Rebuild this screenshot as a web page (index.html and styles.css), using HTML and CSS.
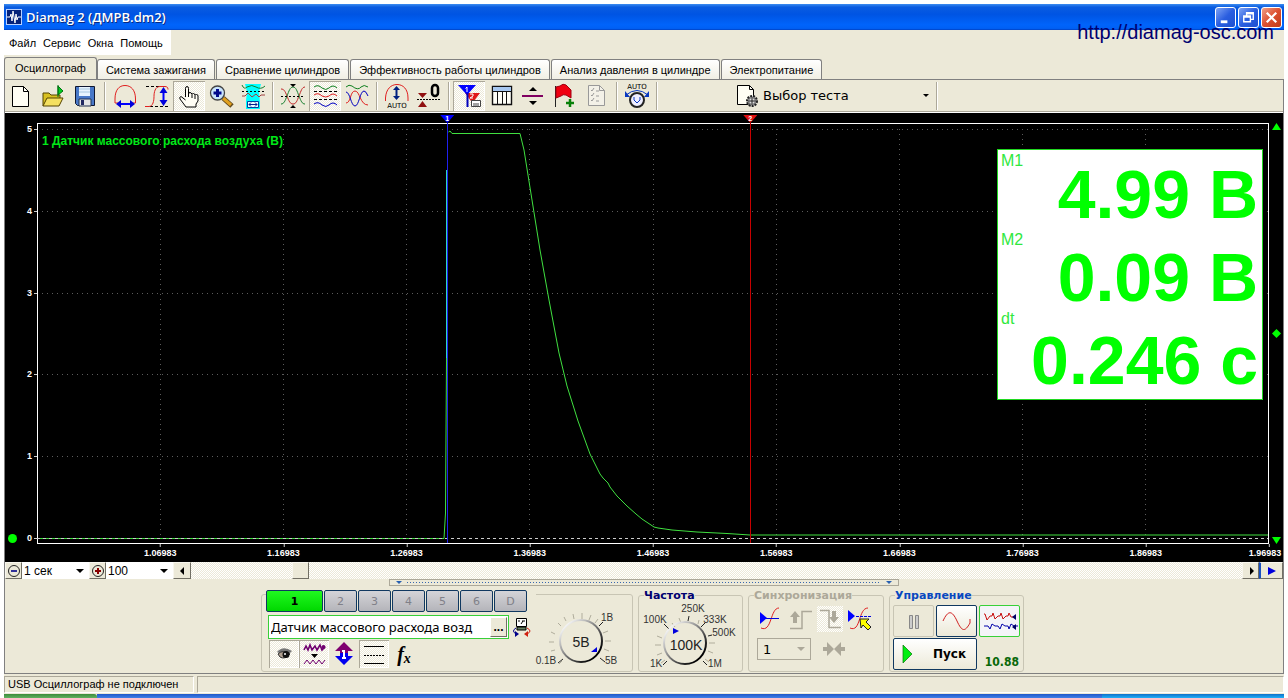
FILE: index.html
```html
<!DOCTYPE html>
<html lang="ru">
<head>
<meta charset="utf-8">
<title>Diamag 2 (ДМРВ.dm2)</title>
<link rel="stylesheet" href="styles.css">
</head>
<body>
<div class="window">
  <header class="titlebar">
    <svg class="app-icon" viewBox="0 0 16 16"><rect x=".5" y=".5" width="15" height="15" fill="#04227a" stroke="#b8d0ff"/><path d="M1 8h3l1-3 1 7 1-10 2 12 1-9 1 6 1-3h3" fill="none" stroke="#fff"/></svg>
    <h1 class="title">Diamag 2 (ДМРВ.dm2)</h1>
    <button class="win-btn" aria-label="Свернуть"><svg viewBox="0 0 20 20"><path d="M5 13h7v3H5z" fill="#fff"/></svg></button>
    <button class="win-btn" aria-label="Восстановить"><svg viewBox="0 0 20 20"><path d="M8 8V5h7v7h-3M8 6h7M5 8.500h7v6H5zM5 9.500h7" fill="none" stroke="#fff" stroke-width="1.500"/></svg></button>
    <button class="win-btn close" aria-label="Закрыть"><svg viewBox="0 0 20 20"><path d="M5 5l10 10M15 5L5 15" stroke="#fff" stroke-width="2.400"/></svg></button>
    <a class="site-link" href="#site">http://diamag-osc.com</a>
  </header>
  <nav class="menubar">
    <button>Файл</button><button>Сервис</button><button>Окна</button><button>Помощь</button>
  </nav>
  <nav class="tabs">
    <button class="tab active">Осциллограф</button>
    <button class="tab">Система зажигания</button>
    <button class="tab">Сравнение цилиндров</button>
    <button class="tab">Эффективность работы цилиндров</button>
    <button class="tab">Анализ давления в цилиндре</button>
    <button class="tab">Электропитание</button>
  </nav>
  <main class="panel">
    <div class="toolbar">
      <button class="tool" aria-label="Новый"><svg viewBox="0 0 32 30"><path d="M7.500 5.500h11l5 5v15h-16z" fill="#fffef4" stroke="#000"/><path d="M18.500 5.500v5h5" fill="none" stroke="#000"/></svg></button>
      <button class="tool" aria-label="Открыть"><svg viewBox="0 0 32 30"><path d="M6 25V12h6l2 2h9v4" fill="#d8c020" stroke="#554400"/><path d="M6 25l4-8h16l-4 8z" fill="#f4e060" stroke="#554400"/><path d="M21 4v12M21 5l5 5-5 4z" fill="#00d020" stroke="#007010"/></svg></button>
      <button class="tool" aria-label="Сохранить"><svg viewBox="0 0 32 30"><path d="M6.500 5.500h19v19h-17l-2-2z" fill="#4878c8" stroke="#101830"/><path d="M10 6h11v9H10z" fill="#e8f4ff"/><path d="M10 8h11M10 11h11" stroke="#a8c8e0"/><path d="M10 18h12v7H10z" fill="#e4e4e4" stroke="#203050"/><path d="M12 19h3v5h-3z" fill="#202860"/></svg></button>
      <span class="sep"></span>
      <button class="tool" aria-label="Ширина"><svg viewBox="0 0 32 30"><path d="M9 22H6v-4C6 9 10 4.500 16 4.500S26.500 9 26.500 18v4H24" fill="none" stroke="#e02020"/><path d="M10 23h13" stroke="#00f" stroke-width="2"/><path d="M7 23l5-4v8zM26 23l-5-4v8z" fill="#00d"/></svg></button>
      <button class="tool" aria-label="Высота"><svg viewBox="0 0 32 30"><path d="M5 5.500h20M9 25.500h18" stroke="#000" stroke-dasharray="3 2"/><path d="M4 25.500h4c4 0 5-6 5-10s1-10 6-10h5c2 0 3 1 3 3" fill="none" stroke="#e02020"/><path d="M22.500 9v14" stroke="#00f" stroke-width="2"/><path d="M22.500 6l4 6h-8zM22.500 25l4-6h-8z" fill="#00d"/></svg></button>
      <button class="tool pressed" aria-label="Рука"><svg viewBox="0 0 32 30"><path d="M12.500 16V7.500q0-2 1.500-2t1.500 2V13q0-1.500 1.500-1.500T19 13.500q0-1 1.500-1t1.500 2q0-1 1.500-1t1.500 1.500v5l-2 3v3h-10l-6-8q-1-2 1-2.500l4.500 3.500M15.500 13v3M19 14v3M22 15v3" fill="#fffdf4" stroke="#000"/></svg></button>
      <button class="tool" aria-label="Лупа"><svg viewBox="0 0 32 30"><path d="M18 17l9 8" stroke="#60481c" stroke-width="5"/><path d="M18 17l8 7" stroke="#e0a020" stroke-width="3"/><circle cx="12.500" cy="12" r="7" fill="#c8e4fc" stroke="#444" stroke-width="1.300"/><path d="M8.500 12h8M12.500 8v8" stroke="#00098c" stroke-width="3"/></svg></button>
      <button class="tool" aria-label="Окно измерения"><svg viewBox="0 0 32 30"><path d="M8 3h16l-2 8 1 10v7H9v-9l1-8z" fill="#0ff"/><path d="M5 4q2 5 5 2 5-3 9 0 5 3 9-1" fill="none" stroke="#108030"/><path d="M5 10.500h23" stroke="#000" stroke-dasharray="2 2"/><path d="M5 15h3l3-3 4 4 4-3 3 3 2-2h4" fill="none" stroke="#a04040"/><path d="M10.500 20.500h11v6h-11z" fill="#e8fcff" stroke="#0040a0"/><path d="M12 23.500h8M14 21.500l-2 2 2 2M18 21.500l2 2-2 2" fill="none" stroke="#002090"/></svg></button>
      <span class="sep"></span>
      <button class="tool" aria-label="Пересечение"><svg viewBox="0 0 32 30"><path d="M4 8c3 0 4 2 6 7s3 8 6 8 4-3 6-8 3-9 6-9" fill="none" stroke="#c02828"/><path d="M4 23c3 0 4-3 6-8s3-9 6-9 4 4 6 9 3 8 6 8" fill="none" stroke="#188030"/><path d="M4 15.500h24" stroke="#000" stroke-dasharray="2 2"/><path d="M13 3h6l-3 3zM13 27h6l-3-3z"/></svg></button>
      <button class="tool pressed" aria-label="Раздельно"><svg viewBox="0 0 32 30"><path d="M5 6q4-3 8 1 4 3 7 0 4-4 8 0" fill="none" stroke="#108020"/><path d="M5 14q4-3 8 1 4 2 7 0 4-4 8 0" fill="none" stroke="#e02020"/><path d="M5 23q4-3 8 1 4 3 7 0 4-4 8 0" fill="none" stroke="#0000c0"/><path d="M5 10.500h23M5 18.500h23" stroke="#000" stroke-dasharray="3 2"/></svg></button>
      <button class="tool" aria-label="Вместе"><svg viewBox="0 0 32 30"><path d="M5 6q3-3 6-1 6 5 9 1 3-3 7 0" fill="none" stroke="#108020"/><path d="M5 22c5 0 4-12 9-12s5 14 13 14" fill="none" stroke="#e02020"/><path d="M5 11c4 0 5 14 9 14s5-15 9-15q2 0 4 5" fill="none" stroke="#0000c0"/></svg></button>
      <span class="sep"></span>
      <button class="tool" aria-label="Авто масштаб"><svg viewBox="0 0 32 30"><path d="M4.500 20v-3C5 8 10 3.500 16 3.500S27 8 27 17v3" fill="none" stroke="#e02020"/><path d="M15.500 8v8" stroke="#002080" stroke-width="2"/><path d="M15.500 5l3.500 4h-7zM15.500 19l3.500-4h-7z" fill="#002080"/><text x="16" y="27" class="ico-text">AUTO</text></svg></button>
      <button class="tool" aria-label="Ноль"><svg viewBox="0 0 32 30"><path d="M4 18.500h23" stroke="#000" stroke-dasharray="2 1"/><path d="M5 12h9l-4.500 5zM5 26h9l-4.500-6z" fill="#901010"/><rect x="19" y="4" width="6" height="11" rx="3" fill="none" stroke="#000" stroke-width="2.500"/></svg></button>
      <span class="sep"></span>
      <button class="tool pressed" aria-label="Маркеры"><svg viewBox="0 0 32 30"><path d="M12 12h15l-7.500 10z" fill="#e01818"/><path d="M5 4h18l-9 10z" fill="#00f"/><path d="M14.500 12v14" stroke="#00b" stroke-width="2"/><path d="M14 6v5M12.500 7.500L14 6" stroke="#fff"/><path d="M17 13h3v2l-3 2h3" fill="none" stroke="#fff"/><path d="M18.500 19.500h9v6h-9z" fill="#fff" stroke="#444"/><path d="M21 22v3M23 22v3M25 22v3" stroke="#444"/></svg></button>
      <button class="tool" aria-label="Таблица"><svg viewBox="0 0 32 30"><path d="M7.500 5.500h19v18h-19z" fill="#fffff8" stroke="#111" stroke-width="1.400"/><path d="M8 6h18v4H8z" fill="#a8c8f0"/><path d="M8 10.500h18M12.500 10v13M17.500 10v13M21.500 10v13" stroke="#111"/></svg></button>
      <button class="tool" aria-label="Разделитель"><svg viewBox="0 0 32 30"><path d="M5 15h21" stroke="#800060" stroke-width="2"/><path d="M12 10h8l-4-4zM12 20h8l-4 4z"/></svg></button>
      <button class="tool" aria-label="Флаг"><svg viewBox="0 0 32 30"><path d="M6.500 5v21" stroke="#222"/><path d="M7 6l4-1q3-3 6-1l5 5v8l-5-3q-3-1-5 1l-5 2z" fill="#f00010" stroke="#a00010"/><path d="M17 22h8M21 18v8" stroke="#088008" stroke-width="2.500"/></svg></button>
      <button class="tool" aria-label="Список"><svg viewBox="0 0 32 30"><path d="M7.500 4.500h11l5 5v15h-16z" fill="#f3f1e8" stroke="#999"/><path d="M18.500 4.500v5h5M10 9l1 1 2-3M10 14l1 1 2-3M10 19l1 1 2-3M15 10h3M15 15h3M15 20h3" fill="none" stroke="#999"/></svg></button>
      <span class="sep"></span>
      <button class="tool" aria-label="Авто"><svg viewBox="0 0 32 30"><text x="16" y="8" class="ico-text">AUTO</text><path d="M5 14q11-9 22 0" fill="none" stroke="#0838c0"/><path d="M4 10v6h5zM28 10v6h-5z" fill="#0838c0"/><circle cx="16" cy="19" r="7" fill="#eef" stroke="#222" stroke-width="2"/><path d="M13 16v3l3 3 3-3v-3" fill="none" stroke="#0838c0"/></svg></button>
      <span class="sep"></span>
      <button class="test-select"><svg viewBox="0 0 24 24"><path d="M1.500 1.500h12l4 4v15h-16z" fill="#fffef4" stroke="#000"/><path d="M13.500 1.500v4h4" fill="none" stroke="#000"/><circle cx="16" cy="17" r="5" fill="#bbb" stroke="#222" stroke-width="2" stroke-dasharray="2 1"/><circle cx="16" cy="17" r="3.500" fill="#ddd" stroke="#555"/><path d="M13 17h6M16 14v6" stroke="#222"/></svg><span>Выбор теста</span><i class="caret"></i></button>
      <span class="sep"></span>
    </div>

    <section class="scope" aria-label="Осциллограмма">
      <div class="axis-left"><i class="zero-dot"></i></div>
      <div class="plot">
        <svg class="plot-svg" viewBox="0 0 1232 421" preserveAspectRatio="none">
          <g class="grid">
            <path d="M0 6H1231M0 88H1231M0 170H1231M0 251H1231M0 333H1231"/>
            <path d="M123 6V415M246 6V415M369 6V415M492 6V415M616 6V415M739 6V415M862 6V415M985 6V415M1108 6V415"/>
          </g>
          <path class="frame" d="M.5 .5H1231.500V420.500H.5z"/>
          <path class="trace" d="M0 415.500H407L408.500 390L409.500 235V48M411.500 9L413 8L415 10.500H483L487 27L495 77L503 127L512 177L522 230L530 263L541 298L553 331L563 351L566 355L571 360L573 364L580 373L590 383L599 391L605 396L614 402L617 404L621 405L635 407L660 409L690 410.500L713 412H1231"/>
          <path class="zero" d="M0 415.500H1231"/>
          <path class="m1" d="M410.500 0V420"/>
          <path class="trace edge" d="M409.500 47V235"/>
          <path class="m2" d="M713.500 0V420"/>
        </svg>
        <span class="tick-y" style="top:1.5%">5</span><span class="tick-y" style="top:21%">4</span><span class="tick-y" style="top:40.4%">3</span><span class="tick-y" style="top:59.7%">2</span><span class="tick-y" style="top:79.2%">1</span><span class="tick-y" style="top:98.6%">0</span>
        <span class="tick-x" style="left:10%">1.06983</span><span class="tick-x" style="left:20%">1.16983</span><span class="tick-x" style="left:30%">1.26983</span><span class="tick-x" style="left:40%">1.36983</span><span class="tick-x" style="left:50%">1.46983</span><span class="tick-x" style="left:60%">1.56983</span><span class="tick-x" style="left:70%">1.66983</span><span class="tick-x" style="left:80%">1.76983</span><span class="tick-x" style="left:90%">1.86983</span><span class="tick-x last" style="left:100%">1.96983</span>
        <span class="flag flag-1" style="left:33.3%">1</span>
        <span class="flag flag-2" style="left:57.9%">2</span>
        <h2 class="channel-name">1 Датчик массового расхода воздуха (В)</h2>
        <div class="readout">
          <div class="readout-labels"><span>M1</span><span>M2</span><span>dt</span></div>
          <div class="readout-values"><span>4.99 В</span><span>0.09 В</span><span>0.246 с</span></div>
        </div>
      </div>
      <div class="axis-right">
        <svg viewBox="0 0 9 7"><path d="M4.500 0L9 7H0z"/></svg>
        <svg viewBox="0 0 9 9"><path d="M4.500 0L9 4.500L4.500 9L0 4.500z"/></svg>
        <svg viewBox="0 0 9 7"><path d="M4.500 7L9 0H0z"/></svg>
      </div>
    </section>

    <div class="timebar">
      <button class="bevel" aria-label="Уменьшить"><svg viewBox="0 0 14 14"><circle cx="7" cy="7" r="5.500" fill="none" stroke="#222"/><path d="M4 7h6" stroke="#008" stroke-width="1.600"/></svg></button>
      <span class="combo"><select aria-label="Время"><option>1 сек</option></select></span>
      <button class="bevel" aria-label="Увеличить"><svg viewBox="0 0 14 14"><circle cx="7" cy="7" r="5.500" fill="none" stroke="#222"/><path d="M4 7h6M7 4v6" stroke="#800" stroke-width="2"/></svg></button>
      <span class="combo"><select aria-label="Масштаб"><option>100</option></select></span>
      <button class="bevel scroll-left" aria-label="Влево"><svg viewBox="0 0 14 14"><path d="M9 3v8L5 7z"/></svg></button>
      <div class="track"><button class="bevel thumb" aria-label="Прокрутка"></button></div>
      <button class="bevel" aria-label="Вправо"><svg viewBox="0 0 14 14"><path d="M6 3v8l4-4z"/></svg></button>
      <button class="bevel play" aria-label="Воспроизвести"><svg viewBox="0 0 14 14"><path d="M3 3v8l8-4z" fill="#00d"/></svg></button>
    </div>

    <div class="splitter"><i class="tri"></i><i class="dots"></i><i class="tri"></i></div>

    <div class="controls">
      <section class="box channel">
        <div class="channel-main">
          <div class="channel-tabs">
            <button class="ch on">1</button><button class="ch">2</button><button class="ch">3</button><button class="ch">4</button><button class="ch">5</button><button class="ch">6</button><button class="ch">D</button>
          </div>
          <div class="name-row">
            <div class="name-field"><input type="text" aria-label="Датчик" value="Датчик массового расхода возд"><button class="more" aria-label="Выбрать">...</button></div>
            <button class="plain" aria-label="Переключить"><svg viewBox="0 0 20 22"><path d="M4.500 2.500h10v8h-10z" fill="#fff" stroke="#000"/><path d="M5 11h9v3H5z" fill="#668060" stroke="#000"/><path d="M6 5h2M10 5h3M9 8l2-3" stroke="#000"/><path d="M4 12q-5 3 0 6" fill="none" stroke="#008"/><path d="M3 15v6l4-3z" fill="#008"/><path d="M15 12q6 3 0 6" fill="none" stroke="#d02010"/><path d="M16 15v6l-4-3z" fill="#d02010"/></svg></button>
          </div>
          <div class="ch-tools">
            <button class="ct pressed" aria-label="Видимость"><svg viewBox="0 0 30 28"><path d="M8 12q6-7 15-1l-2 2H10z" fill="#777"/><path d="M9 14q5-5 12 0-5 6-10 3z" fill="#b0a090" stroke="#333"/><circle cx="17" cy="14.500" r="3.500" fill="#111"/><circle cx="16" cy="14" r="1" fill="#fff"/></svg></button>
            <button class="ct pressed" aria-label="Фильтр"><svg viewBox="0 0 30 28"><path d="M5 10l2-4 2 4 2-5 2 5 3-4 2 4 3-5 2 5 3-3" fill="none" stroke="#700070" stroke-width="1.600"/><circle cx="24.500" cy="7" r="2" fill="#700070"/><path d="M12 14h7l-3.500 4z"/><path d="M5 24l3-4 3 4 3-4 3 4 3-4 3 4 3-4" fill="none" stroke="#700070"/></svg></button>
            <button class="ct" aria-label="Инверсия"><svg viewBox="0 0 30 28"><path d="M15 2l9 9h-5v3h-8v-3H6z" fill="#800070"/><path d="M15 25l9-9h-5v-3h-8v3H6z" fill="#0000f0"/><path d="M15 10v8M13 18h4M13 11h2" stroke="#fff" stroke-width="2"/></svg></button>
            <button class="ct pressed" aria-label="Линии"><svg viewBox="0 0 30 28"><path d="M5 6.500h20M5 23.500h20" stroke="#000"/><path d="M5 15.500h20" stroke="#000" stroke-dasharray="2 1"/></svg></button>
            <button class="ct fx"><i>f<sub>x</sub></i></button>
          </div>
        </div>
        <svg class="dial" viewBox="0 0 98 70">
          <defs><linearGradient id="rim" x1="0" y1="0" x2="1" y2="1"><stop offset=".1" stop-color="#fff"/><stop offset=".5" stop-color="#777"/><stop offset=".85" stop-color="#000"/></linearGradient></defs>
          <path class="minor" d="M28 59l-3 3M21 48l-4 1M20 40h-5M21 32l-4-2M27 24l-3-3M32 19l-2-4M40 17l-1-5M48 17v-6M55 18l2-5M61 21l3-4M69 31l5-2M71 39h6M70 47l5 2"/>
          <path class="major" d="M65 24l4-4M29 57l-5 4M66 56l5 4"/>
          <circle cx="47" cy="39" r="21" fill="none" stroke="url(#rim)" stroke-width="2"/>
          <path d="M57 50h6v-5z" fill="#00d"/>
          <text x="47" y="45" class="dial-value">5B</text>
          <text x="73" y="19">1B</text><text x="12" y="62">0.1B</text><text x="77" y="62">5B</text>
        </svg>
      </section>

      <fieldset class="box freq">
        <legend>Частота</legend>
        <svg class="dial" viewBox="0 0 98 70">
          <path class="minor" d="M23 55l-4 3M20 48l-5 2M19 40h-6M20 33l-5-2M33 22l-3-4M39 18l-2-5M56 19l1-4M67 38h6M66 46l5 2M63 54l4 3"/>
          <path class="major" d="M27 24l-5-5M46 16l1-5M59 22l4-4M66 31l4-1M61 56l4 4M25 56l-4 4"/>
          <circle cx="43" cy="38" r="21" fill="none" stroke="url(#rim)" stroke-width="2"/>
          <path d="M31 23v6l6-3z" fill="#00d"/>
          <text x="44" y="45" class="dial-value">100K</text>
          <text x="51" y="7">250K</text><text x="13" y="18">100K</text><text x="73" y="18">333K</text><text x="82" y="31">500K</text><text x="73" y="62">1M</text><text x="14" y="62">1K</text>
        </svg>
      </fieldset>

      <fieldset class="box sync">
        <legend>Синхронизация</legend>
        <div class="sync-row">
          <button class="plain" aria-label="Уровень"><svg viewBox="0 0 26 26"><path d="M4 22c11 5 9-20 18-20" fill="none" stroke="#e02020"/><path d="M4 12.500h18" stroke="#00d"/><path d="M3 6v12l7-6z" fill="#00f"/></svg></button>
          <button class="plain" aria-label="Фронт"><svg viewBox="0 0 26 26"><path d="M3 22.500h12v-17h10" fill="none" stroke="#aca899" stroke-width="1.500"/><path d="M8 5l5 6h-3v6H6v-6H3z" fill="#aca899"/></svg></button>
          <button class="plain pressed-flat" aria-label="Спад"><svg viewBox="0 0 26 26"><path d="M3 4.500h9v17h12" fill="none" stroke="#aca899" stroke-width="1.500"/><path d="M17 17l5-6h-3V5h-4v6h-3z" fill="#aca899"/></svg></button>
          <button class="plain" aria-label="Выбор"><svg viewBox="0 0 26 26"><path d="M3 22c11 5 8-20 18-20" fill="none" stroke="#e02020"/><path d="M9 10.500h15" stroke="#00d" stroke-dasharray="3 1"/><path d="M1 4v12l7-6z" fill="#00f"/><path d="M13 13h9l-3 3 5 5-3 3-5-5-2 3z" fill="#ff0" stroke="#222"/></svg></button>
        </div>
        <div class="sync-row">
          <span class="combo disabled"><select aria-label="Канал" disabled><option>1</option></select></span>
          <svg class="arrows" viewBox="0 0 26 26"><path d="M2 13h6M18 13h6" stroke="#aca899" stroke-width="4"/><path d="M6 6l7 7-7 7zM20 6l-7 7 7 7z" fill="#aca899"/></svg>
        </div>
      </fieldset>

      <fieldset class="box run">
        <legend>Управление</legend>
        <div class="run-grid">
          <button class="rb off" aria-label="Пауза"><svg viewBox="0 0 38 30"><path d="M14.500 9.500h3v13h-3zM20.500 9.500h3v13h-3z" fill="#ccc" stroke="#888"/></svg></button>
          <button class="rb" aria-label="Синус"><svg viewBox="0 0 38 30"><path d="M5 15C10 4 14 4 19 15S27 26 32 17V13" fill="none" stroke="#d02020"/></svg></button>
          <button class="rb green" aria-label="Сигналы"><svg viewBox="0 0 38 30"><path d="M3 8h1l2 6 3-4h2l1-3 2 6 3-3h2l1-3 2 6 3-3h2l1-3 2 4h4" fill="none" stroke="#c81010"/><path d="M3 20h4l2 3 2-5 3 2h3l2 3 2-5 3 2h3l1 3 2-5 3 2h4" fill="none" stroke="#00a"/><path d="M31 11l4-3v6zM31 21l4-3v6z" fill="#006"/></svg></button>
          <button class="rb start"><svg viewBox="0 0 12 20"><path d="M1 1v18l9-9z" fill="#00f010" stroke="#087008" stroke-width=".7"/></svg><span>Пуск</span></button>
          <output class="version">10.88</output>
        </div>
      </fieldset>
    </div>
  </main>
  <footer class="status"><span class="cell first">USB Осциллограф не подключен</span><span class="cell"></span></footer>
  <div class="taskbar"><i class="task-start"></i><i class="task-mid"></i><i class="task-tray"></i></div>
</div>
</body>
</html>
```

FILE: styles.css
```css
* { box-sizing: border-box; }
body {
  margin: 0;
  background: #fff;
  color: #000;
  font-family: "Liberation Sans", sans-serif;
  font-size: 12px;
}
button, input, select { font: inherit; color: inherit; }
button { padding: 0; border: 0; background: none; }
svg { display: block; }
.window {
  display: flex;
  flex-direction: column;
  min-height: 100vh;
  padding: 4px 4px 0;
  background: linear-gradient(#ece9d8, #ece9d8) 4px 4px / calc(100% - 8px) 100% no-repeat;
}

.titlebar {
  position: relative;
  display: flex;
  align-items: center;
  gap: 2px;
  height: 26px;
  padding: 0 2px;
  background: linear-gradient(#3c8cf0 0, #0a5ce0 12%, #0054e3 40%, #0064fb 80%, #0060f4 94%, #0040c0 100%);
}
.app-icon { width: 16px; height: 16px; }
.title {
  flex: 1;
  margin: 0 0 0 2px;
  color: #fff;
  font: 600 13px "Open Sans", sans-serif;
  text-shadow: 1px 1px 0 #0a2a80;
}
.win-btn {
  width: 21px;
  height: 21px;
  border: 1px solid #fff;
  border-radius: 3px;
  background: linear-gradient(135deg, #7fa4f4, #2a5ee0 50%, #1c50d0);
}
.win-btn.close { background: linear-gradient(135deg, #f0a088, #dc5030 50%, #c03c18); }
.site-link {
  position: absolute;
  right: 10px;
  top: 16px;
  color: #000070;
  font-size: 20px;
  line-height: 24px;
  text-decoration: none;
}

.menubar {
  align-self: flex-start;
  display: flex;
  gap: 7px;
  height: 25px;
  padding: 0 8px 0 5px;
  background: #fff;
  font-size: 11px;
}

.tabs {
  display: flex;
  align-items: flex-end;
  gap: 1px;
  height: 24px;
}
.tab {
  height: 20px;
  padding: 0 8px;
  border: 1px solid #808080;
  border-bottom: 0;
  border-radius: 3px 3px 0 0;
  background: linear-gradient(#fff, #f1efe4);
  font-size: 11px;
  white-space: nowrap;
}
.tab.active {
  height: 23px;
  margin: 0 -1px -1px 0;
  padding: 0 10px 3px;
  background: #ece9d8;
}

.panel {
  flex: 1;
  display: flex;
  flex-direction: column;
  border: 1px solid #808080;
}
.toolbar {
  display: flex;
  align-items: center;
  height: 33px;
  border-bottom: 1px solid #fff;
  box-shadow: inset 0 -1px #aca899;
  padding-bottom: 1px;
}
.tool { width: 32px; height: 30px; }
.tool svg { width: 32px; height: 30px; margin: -1px 0; }
.pressed {
  box-shadow: inset 1px 1px #aca899, inset -1px -1px #fff;
  background: repeating-conic-gradient(#fff 0 25%, #ece9d8 0 50%) 0 0 / 2px 2px;
}
.sep {
  width: 8px;
  height: 28px;
  background: linear-gradient(90deg, #aca899 50%, #fff 50%) 3px 0 / 2px 100% no-repeat;
}
.ico-text { font: 7px "DejaVu Sans", sans-serif; text-anchor: middle; }
.test-select {
  display: flex;
  align-items: center;
  width: 272px;
  height: 30px;
  padding-left: 75px;
  font: 13px "DejaVu Sans", sans-serif;
}
.test-select svg { width: 24px; height: 24px; margin-right: 3px; }
.caret { margin-left: auto; margin-right: 4px; border: 3px solid transparent; border-top-color: #000; border-bottom: 0; }

.scope {
  flex: 1;
  display: grid;
  grid-template-columns: 32px 1fr 14px;
  padding: 10px 0 18px;
  background: #000;
  overflow: hidden;
}
.axis-left { display: flex; align-items: flex-end; }
.zero-dot { width: 9px; height: 9px; margin: 0 0 1px 3px; border-radius: 50%; background: #0f0; }
.plot { position: relative; min-height: 300px; }
.plot-svg { position: absolute; width: 100%; height: 100%; }
.plot-svg path { fill: none; vector-effect: non-scaling-stroke; }
.grid { stroke: #5c5c5c; stroke-dasharray: 1 4; shape-rendering: crispEdges; }
.frame { stroke: #fff; shape-rendering: crispEdges; }
.trace { stroke: #40e040; }
.plot-svg .edge { stroke: #30d8c0; }
.zero { stroke: #ccc; stroke-dasharray: 3 3; shape-rendering: crispEdges; }
.m1 { stroke: #2020f0; shape-rendering: crispEdges; }
.m2 { stroke: #c80000; shape-rendering: crispEdges; }
.tick-y, .tick-x {
  position: absolute;
  color: #fff;
  font-size: 9px;
  font-weight: bold;
  line-height: 12px;
}
.tick-y { right: 100%; margin-top: -6px; padding-right: 5px; }
.tick-y::after { content: ""; position: absolute; right: 0; top: 6px; width: 3px; height: 1px; background: #ccc; }
.tick-x { top: 100%; padding-top: 3px; transform: translateX(-50%); }
.tick-x::before { content: ""; position: absolute; left: 50%; top: 0; width: 1px; height: 3px; background: #ccc; }
.tick-x.last { transform: translateX(-62%); }
.tick-x.last::before { left: 62%; }
.flag {
  position: absolute;
  bottom: 100%;
  width: 14px;
  height: 8px;
  margin-left: -7px;
  clip-path: polygon(0 0, 100% 0, 50% 100%);
  color: #fff;
  font-size: 7px;
  font-weight: bold;
  line-height: 7px;
  text-align: center;
}
.flag-1 { background: #00f; }
.flag-2 { background: #e01010; }
.channel-name {
  position: absolute;
  left: 5px;
  top: 10px;
  margin: 0;
  color: #00e818;
  font-size: 12px;
  line-height: 16px;
}
.readout {
  position: absolute;
  right: 6px;
  top: 26px;
  display: flex;
  justify-content: space-between;
  width: 266px;
  padding: 1px 4px 0 3px;
  border: 1px solid #20d820;
  background: #fff;
  color: #00ff00;
}
.readout span { display: block; white-space: nowrap; }
.readout-labels { font-size: 16px; line-height: 20px; color: #30e840; }
.readout-labels span { height: 79px; }
.readout-values { padding-top: 2px; margin-bottom: -3px; font-size: 68px; font-weight: bold; line-height: 83px; text-align: right; }
.axis-right { display: flex; flex-direction: column; justify-content: space-between; align-items: center; fill: #0f0; }
.axis-right svg { width: 9px; }

.timebar { display: flex; height: 17px; background: #fff; }
.bevel {
  width: 17px;
  height: 17px;
  flex: none;
  border: 1px solid;
  border-color: #f8f6ee #716f64 #716f64 #f8f6ee;
  background: #ece9d8;
}
.bevel svg { width: 14px; height: 14px; margin: 0 auto; }
.combo { position: relative; display: flex; width: 67px; background: #fff; }
.combo::after {
  content: "";
  position: absolute;
  right: 5px;
  top: 50%;
  margin-top: -2px;
  border: 4px solid transparent;
  border-top-color: #000;
  border-bottom: 0;
}
.combo select { appearance: none; width: 100%; padding: 0 2px; border: 0; background: none; }
.scroll-left { width: 18px; }
.track { flex: 1; background: repeating-conic-gradient(#fff 0 25%, #ece9d8 0 50%) 0 0 / 2px 2px; }
.thumb { display: block; margin-left: 9.6%; }
.play { width: 24px; border-left: 2px solid #1850c0; }

.splitter {
  align-self: center;
  display: flex;
  align-items: center;
  justify-content: space-between;
  gap: 5px;
  width: 510px;
  height: 7px;
  padding: 0 6px;
  border: 1px solid #aca899;
}
.tri { border: 3px solid transparent; border-top-color: #2860b0; border-bottom: 0; }
.dots { flex: 1; height: 1px; background: repeating-linear-gradient(90deg, #3868b0 0 1px, transparent 1px 3px); }

.controls { display: flex; justify-content: center; align-items: stretch; gap: 5px; height: 87px; padding: 3px 3px 1px 0; }
.box { margin: 0; padding: 0; min-width: 0; border: 1px solid #c8c5b4; border-radius: 3px; }
.box legend { margin-left: 5px; padding: 0; font: bold 11px/13px "DejaVu Sans", sans-serif; color: #000070; }
.channel { display: flex; width: 372px; margin-top: 5px; }
.channel-main { width: 268px; margin: -5px 0 0 4px; }
.channel-tabs { display: flex; gap: 1px; background: #ece9d8; width: 270px; position: relative; }
.ch {
  width: 33px;
  height: 22px;
  border: 1px solid #103860;
  border-radius: 2px;
  background: linear-gradient(#d4d4d8, #b4b4ba);
  color: #808088;
  font: 11px "DejaVu Sans", sans-serif;
}
.ch.on { width: 57px; background: linear-gradient(#20f820, #00d800); color: #000; font-weight: bold; }
.name-row { display: flex; gap: 3px; padding: 3px 0 0 2px; }
.name-field { display: flex; width: 241px; height: 24px; border: 1px solid #38d038; background: #fff; }
.name-field input {
  flex: 1;
  min-width: 0;
  padding: 0 2px;
  border: 0;
  outline: 0;
  background: none;
  font: 13px "Noto Sans", sans-serif;
}
.more { width: 17px; margin: 1px; border: 1px solid; border-color: #fff #716f64 #716f64 #fff; background: #ece9d8; font-weight: bold; line-height: 8px; }
.plain svg { width: 20px; height: 22px; }
.ch-tools { display: flex; padding: 1px 0 0 3px; }
.ct { width: 30px; height: 28px; }
.ct svg { width: 30px; height: 28px; }
.fx i { font: italic bold 20px/20px "Liberation Serif", serif; }
.fx sub { font-size: 14px; line-height: 8px; vertical-align: -2px; }
.dial { width: 98px; height: 70px; overflow: visible; }
.dial text { font-size: 10px; fill: #333; text-anchor: middle; }
.dial .dial-value { font-size: 14px; fill: #222; }
.minor { stroke: #b0ad9c; }
.major { stroke: #222; }
.channel .dial { margin-top: 7px; }
.freq { width: 105px; }
.freq .dial { margin: 3px 0 -3px 3px; }
.sync { width: 136px; }
.sync legend { color: #aca899; }
.sync-row { display: flex; align-items: center; gap: 4px; padding: 4px 0 0 8px; }
.sync-row .plain svg { width: 26px; height: 26px; }
.pressed-flat { background: repeating-conic-gradient(#fff 0 25%, #ece9d8 0 50%) 0 0 / 2px 2px; }
.combo.disabled { width: 54px; height: 22px; border: 1px solid #aca899; background: none; }
.combo.disabled::after { border-top-color: #aca899; }
.combo.disabled select { padding-left: 5px; color: #000; opacity: 1; font: 13px "DejaVu Sans", sans-serif; }
.arrows { width: 26px; height: 26px; margin-left: 6px; }
.run { width: 135px; }
.run legend { color: #0848c0; }
.run-grid { display: grid; grid-template-columns: 41px 41px 41px; gap: 1px 2px; padding: 3px 0 0 3px; }
.rb {
  display: flex;
  align-items: center;
  justify-content: center;
  height: 32px;
  border: 1px solid #103860;
  border-radius: 2px;
  background: linear-gradient(#fff, #ece9d8);
}
.rb svg { width: 38px; height: 30px; }
.rb.off { border-color: #c8c5b4; background: none; }
.rb.green { border-color: #38d038; background: #f4f4f8; }
.rb.start { grid-column: span 2; justify-content: flex-start; gap: 19px; padding-left: 8px; font: bold 12px "DejaVu Sans", sans-serif; }
.rb.start svg { width: 12px; height: 20px; }
.version { align-self: end; justify-self: end; padding: 0 1px 1px 0; color: #086808; font: bold 12px "DejaVu Sans Condensed", sans-serif; }

.status { display: flex; gap: 3px; height: 20px; padding: 2px 0 1px; }
.cell {
  flex: 1;
  padding-left: 3px;
  border: 1px solid;
  border-color: #aca899 #fff #fff #aca899;
  font-size: 11px;
  line-height: 15px;
}
.cell.first { flex: 0 0 190px; }
.taskbar { display: flex; height: 4px; }
.task-start { width: 93px; background: linear-gradient(#3c8c3c, #60b060); border-radius: 0 3px 0 0; }
.task-mid { flex: 1; background: linear-gradient(#2058c8, #4080e8); }
.task-tray { width: 182px; background: linear-gradient(#1070c8, #20b0f8); }
```
